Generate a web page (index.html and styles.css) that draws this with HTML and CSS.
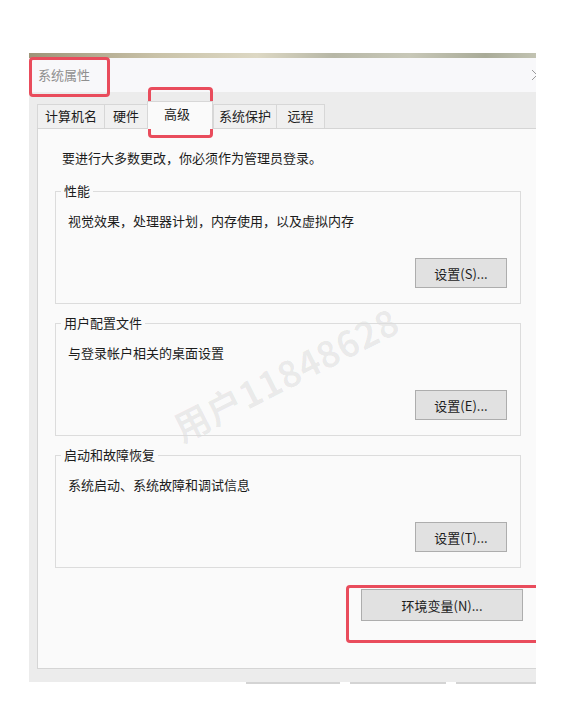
FILE: index.html
```html
<!DOCTYPE html>
<html lang="zh-CN">
<head>
<meta charset="utf-8">
<title>系统属性</title>
<link rel="stylesheet" href="styles.css">
</head>
<body>
<div class="window">
  <div class="strip"></div>
  <div class="titlebar">
    <span class="title">系统属性</span>
    <svg class="close" width="12" height="12" viewBox="0 0 12 12"><path d="M1 1 L11 11 M11 1 L1 11" stroke="#9a9a9a" stroke-width="1" fill="none"/></svg>
  </div>
  <div class="dialog">
    <div class="tabs">
      <div class="tab t1">计算机名</div>
      <div class="tab t2">硬件</div>
      <div class="tab t3 active">高级</div>
      <div class="tab t4">系统保护</div>
      <div class="tab t5">远程</div>
    </div>
    <div class="panel">
      <span class="watermark">用户11848628</span>
      <p class="notice">要进行大多数更改，你必须作为管理员登录。</p>
      <fieldset class="group">
        <legend>性能</legend>
        <p class="desc">视觉效果，处理器计划，内存使用，以及虚拟内存</p>
        <div class="btn-row"><button class="btn">设置(S)...</button></div>
      </fieldset>
      <fieldset class="group">
        <legend>用户配置文件</legend>
        <p class="desc">与登录帐户相关的桌面设置</p>
        <div class="btn-row"><button class="btn">设置(E)...</button></div>
      </fieldset>
      <fieldset class="group">
        <legend>启动和故障恢复</legend>
        <p class="desc">系统启动、系统故障和调试信息</p>
        <div class="btn-row"><button class="btn">设置(T)...</button></div>
      </fieldset>
      <div class="env-row"><button class="btn env">环境变量(N)...</button></div>
    </div>
  </div>
  <div class="mark mark-title"></div>
  <div class="mark mark-tab"></div>
  <div class="mark mark-env"></div>
</div>
<div class="stubs">
  <span class="stub s1"></span>
  <span class="stub s2"></span>
  <span class="stub s3"></span>
</div>
</body>
</html>
```
FILE: styles.css
```css
html, body {
  margin: 0;
  padding: 0;
  background: #ffffff;
}
body {
  font-family: "Noto Sans CJK SC", "Microsoft YaHei", sans-serif;
  font-size: 13px;
  color: #1c1c1c;
}
.window {
  position: relative;
  margin: 53px 0 0 29px;
  width: 507px;
  overflow: hidden;
  background: #ececec;
}
.strip {
  height: 5px;
  background: linear-gradient(90deg, #9e9478 0%, #c9c2a8 25%, #ddd8c4 45%, #b7b7a6 60%, #c8c8b8 75%, #a9ab98 90%, #c2c3b2 100%);
}
.titlebar {
  height: 34px;
  background: #f8f8fa;
  display: flex;
  align-items: center;
  justify-content: space-between;
  padding-left: 9px;
}
.title {
  color: #8f8f8f;
  font-size: 13px;
  line-height: 16px;
}
.close {
  margin-right: -7px;
}
.dialog {
  padding: 9px 0 13px 8px;
}
.tabs {
  display: flex;
  align-items: flex-end;
  height: 28px;
  margin-bottom: -1px;
  position: relative;
  z-index: 1;
}
.tab {
  box-sizing: border-box;
  height: 24px;
  margin-bottom: 1px;
  border: 1px solid #d7d7d7;
  border-bottom: none;
  border-right: none;
  background: #f0f0f0;
  text-align: center;
  line-height: 22px;
  font-size: 13px;
  color: #1c1c1c;
}
.t1 { width: 67px; }
.t2 { width: 43px; }
.t3 { width: 66px; }
.t4 { width: 63px; }
.t5 { width: 49px; border-right: 1px solid #d7d7d7; }
.tab.active {
  height: 28px;
  margin-bottom: 0;
  background: #fafafa;
  border-right: 1px solid #d7d7d7;
  line-height: 24px;
  padding-right: 6px;
}
.panel {
  position: relative;
  box-sizing: border-box;
  height: 541px;
  border: 1px solid #d5d5d5;
  border-right: none;
  background: #fafafa;
  padding: 21px 0 0 17px;
}
.watermark {
  position: absolute;
  left: 247px;
  top: 244px;
  transform: translate(-50%, -50%) rotate(-27deg);
  font-size: 36px;
  font-weight: 700;
  line-height: 40px;
  color: rgba(0, 0, 0, 0.065);
  white-space: nowrap;
  letter-spacing: 0.5px;
}
.notice {
  margin: 0 0 17px 0;
  padding-left: 7px;
  line-height: 16px;
}
.group {
  position: relative;
  margin: 0;
  width: 466px;
  box-sizing: border-box;
  border: 1px solid #dcdcdc;
  padding: 14px 13px 15px 12px;
  min-width: 0;
}
.group + .group {
  margin-top: 11px;
}
.group legend {
  margin-left: -7px;
  padding: 0 3px;
  line-height: 16px;
  font-size: 13px;
}
.desc {
  margin: 0;
  line-height: 16px;
}
.btn-row {
  display: flex;
  justify-content: flex-end;
  margin-top: 29px;
}
.btn {
  box-sizing: border-box;
  width: 92px;
  height: 30px;
  border: 1px solid #adadad;
  background: #e1e1e1;
  font-family: "Noto Sans CJK SC", "Microsoft YaHei", sans-serif;
  font-size: 13px;
  color: #1c1c1c;
  padding: 0;
}
.env-row {
  display: flex;
  justify-content: flex-end;
  width: 468px;
  margin-top: 21px;
}
.btn.env {
  width: 162px;
  height: 32px;
}
.mark {
  position: absolute;
  box-sizing: border-box;
  border: 3px solid #e94c5c;
  border-radius: 4px;
  pointer-events: none;
}
.mark-title {
  left: 0;
  top: 4px;
  width: 81px;
  height: 40px;
}
.mark-tab {
  left: 119px;
  top: 34px;
  width: 65px;
  height: 51px;
}
.mark-env {
  left: 317px;
  top: 532px;
  width: 200px;
  height: 58px;
}
.stubs {
  display: flex;
  margin-left: 246px;
  width: 290px;
  gap: 10px;
}
.stub {
  height: 2px;
  background: #d4d4d4;
}
.s1 { width: 94px; }
.s2 { width: 96px; }
.s3 { width: 80px; }
```
